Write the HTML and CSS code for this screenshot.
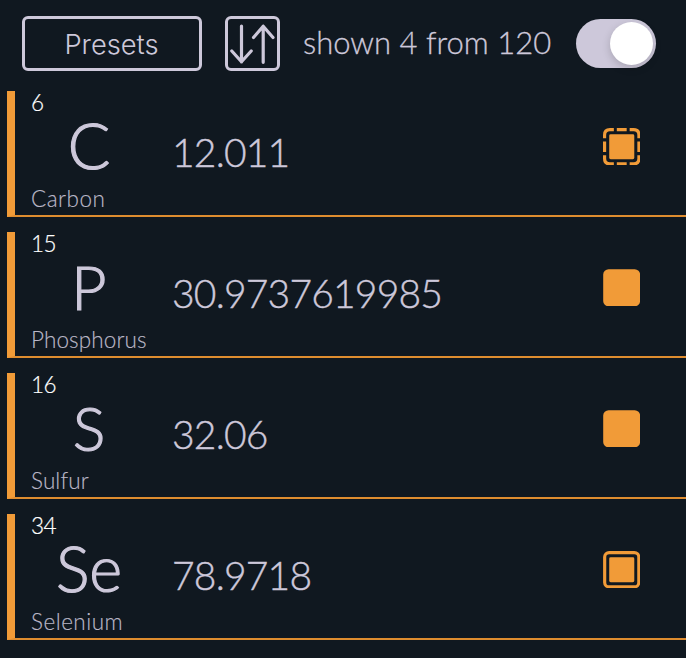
FILE: index.html
```html
<!DOCTYPE html>
<html lang="en">
<head>
<meta charset="utf-8">
<title>Elements</title>
<link rel="stylesheet" href="styles.css">
</head>
<body>
<header class="toolbar">
  <button class="presets"><span class="presets-label">Presets</span></button>
  <button class="sort" aria-label="Sort">
    <svg width="49" height="49" viewBox="0 0 49 49"><path d="M13.5 7v36M3.8 32l9.7 10.8L23.2 32M35.2 43.3V7M25.5 18.5L35.2 7.2l9.8 11.3"/></svg>
  </button>
  <span class="count">shown 4 from 120</span>
  <span class="switch"><span class="knob"></span></span>
</header>
<main class="list">
  <section class="row">
    <div class="element"><span class="number">6</span><span class="symbol symbol-wide">C</span><span class="name name-wide">Carbon</span></div>
    <span class="mass">12.011</span>
    <svg class="state" viewBox="0 0 38 38"><path class="dash" d="M1.6 10.5V7Q1.6 1.6 7 1.6h4M14 1.6h10M27 1.6h4Q36.4 1.6 36.4 7v3.5M36.4 13.7v10.6M36.4 27.5V31Q36.4 36.4 31 36.4h-4M24 36.4H14M11 36.4H7Q1.6 36.4 1.6 31v-3.5M1.6 24.3V13.7"/><rect class="fill" x="6.3" y="6.3" width="25.4" height="25.4" rx="1.5"/></svg>
  </section>
  <section class="row">
    <div class="element"><span class="number">15</span><span class="symbol">P</span><span class="name">Phosphorus</span></div>
    <span class="mass">30.9737619985</span>
    <svg class="state" viewBox="0 0 38 38"><rect class="fill" x="0.2" y="0.2" width="37.4" height="37.6" rx="5.5"/></svg>
  </section>
  <section class="row">
    <div class="element"><span class="number">16</span><span class="symbol">S</span><span class="name">Sulfur</span></div>
    <span class="mass">32.06</span>
    <svg class="state" viewBox="0 0 38 38"><rect class="fill" x="0.2" y="0.2" width="37.4" height="37.6" rx="5.5"/></svg>
  </section>
  <section class="row">
    <div class="element"><span class="number">34</span><span class="symbol symbol-wide">Se</span><span class="name name-wide">Selenium</span></div>
    <span class="mass">78.9718</span>
    <svg class="state" viewBox="0 0 38 38"><rect class="dash" x="1.7" y="1.7" width="34.6" height="34.6" rx="4.5"/><rect class="fill" x="6.3" y="6.3" width="25.4" height="25.4" rx="1.5"/></svg>
  </section>
</main>
</body>
</html>
```
FILE: styles.css
```css
* { box-sizing: border-box; }
body {
  margin: 0;
  height: 658px;
  overflow: hidden;
  background: #101820;
  color: #cdc8da;
  font-family: Lato, "Liberation Sans", sans-serif;
  font-weight: 300;
}
.toolbar {
  display: flex;
  align-items: flex-start;
  height: 91px;
  padding: 16px 0 0 22px;
}
.presets, .sort {
  flex: none;
  height: 55px;
  padding: 0;
  border: 3px solid #cdc8da;
  border-radius: 6px;
  background: none;
  color: inherit;
}
.presets {
  width: 180px;
  padding-right: 1px;
  font: 300 27.3px/50px Inter, sans-serif;
}
.presets-label {
  position: relative;
  top: 1px;
}
.sort {
  width: 55px;
  margin-left: 23px;
}
.sort svg {
  display: block;
  fill: none;
  stroke: #cdc8da;
  stroke-width: 3.2;
  stroke-linecap: round;
  stroke-linejoin: round;
}
.count {
  flex: none;
  width: 296px;
  padding-left: 23px;
  font-size: 31px;
  line-height: 52px;
  white-space: nowrap;
  -webkit-text-stroke: .3px;
}
.switch {
  flex: none;
  display: flex;
  justify-content: flex-end;
  width: 80px;
  height: 49px;
  margin-top: 3px;
  padding: 3px;
  border-radius: 25px;
  background: #cdc8da;
}
.knob {
  width: 43px;
  height: 43px;
  border-radius: 50%;
  background: #fff;
  box-shadow: 0 3px 8px rgba(0, 0, 0, .18);
}
.list {
  display: flex;
  flex-direction: column;
  gap: 15px;
  padding-left: 7px;
}
.row {
  display: flex;
  height: 126px;
  border-left: 8px solid #f19b38;
  border-bottom: 2px solid #df8d2f;
  padding-left: 16px;
}
.element {
  display: flex;
  flex-direction: column;
  width: 116px;
}
.number {
  color: #fff;
  font-size: 22.5px;
  line-height: 24px;
  letter-spacing: -.5px;
  -webkit-text-stroke: .2px;
}
.symbol {
  font-size: 61px;
  line-height: 62px;
  text-align: center;
  -webkit-text-stroke: 1.2px;
}
.symbol-wide {
  font-size: 63px;
  line-height: 60px;
  margin-bottom: 2px;
}
.name {
  color: #bab7c7;
  font-size: 22.5px;
  line-height: 40px;
  margin-top: 2px;
  letter-spacing: .1px;
  -webkit-text-stroke: .15px;
}
.name-wide { letter-spacing: .5px; }
.mass {
  flex: 1;
  padding-left: 25px;
  font-size: 39px;
  line-height: 122px;
  letter-spacing: -.8px;
  -webkit-text-stroke: .4px;
}
.state {
  width: 37.5px;
  height: 37.5px;
  margin: 36.5px 45.7px 0 0;
}
.fill { fill: #f19b38; }
.dash { fill: none; stroke: #f19b38; stroke-width: 3.2; }
```
